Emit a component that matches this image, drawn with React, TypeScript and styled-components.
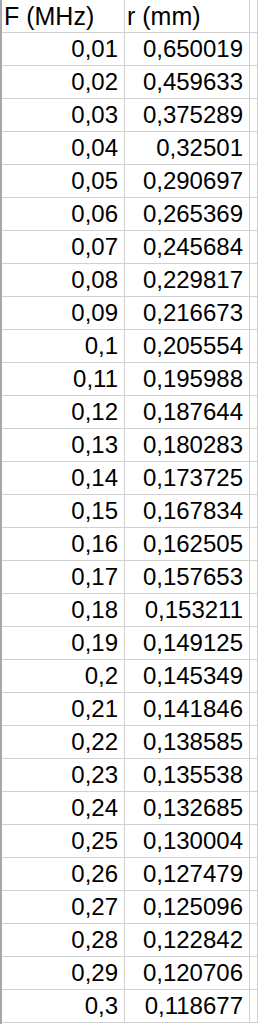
import React from "react";
import styled, { createGlobalStyle } from "styled-components";

const GlobalStyle = createGlobalStyle`
  html, body {
    margin: 0;
    padding: 0;
    background: #ffffff;
  }
`;

const Sheet = styled.div`
  width: 258px;
  height: 1024px;
  overflow: hidden;
  border-left: 2px solid #a7a7a7;
  box-sizing: border-box;
  font-family: "Liberation Sans", Arial, sans-serif;
  font-size: 24px;
  color: #000;
`;

const Row = styled.div`
  display: grid;
  grid-template-columns: 123px 125px 1fr;
  height: 33px;
  box-sizing: border-box;
  border-bottom: 1px solid #d0d0d0;
`;

const Cell = styled.div<{ $align?: "left" | "right" }>`
  box-sizing: border-box;
  border-right: 1px solid #d0d0d0;
  display: flex;
  align-items: center;
  justify-content: ${(p) => (p.$align === "left" ? "flex-start" : "flex-end")};
  padding: ${(p) => (p.$align === "left" ? "0 0 0 2px" : "0 6px 0 0")};
  font-size: ${(p) => (p.$align === "left" ? "25px" : "24px")};
  white-space: nowrap;
  line-height: 1;
`;

const rows: [string, string][] = [
  ["0,01", "0,650019"],
  ["0,02", "0,459633"],
  ["0,03", "0,375289"],
  ["0,04", "0,32501"],
  ["0,05", "0,290697"],
  ["0,06", "0,265369"],
  ["0,07", "0,245684"],
  ["0,08", "0,229817"],
  ["0,09", "0,216673"],
  ["0,1", "0,205554"],
  ["0,11", "0,195988"],
  ["0,12", "0,187644"],
  ["0,13", "0,180283"],
  ["0,14", "0,173725"],
  ["0,15", "0,167834"],
  ["0,16", "0,162505"],
  ["0,17", "0,157653"],
  ["0,18", "0,153211"],
  ["0,19", "0,149125"],
  ["0,2", "0,145349"],
  ["0,21", "0,141846"],
  ["0,22", "0,138585"],
  ["0,23", "0,135538"],
  ["0,24", "0,132685"],
  ["0,25", "0,130004"],
  ["0,26", "0,127479"],
  ["0,27", "0,125096"],
  ["0,28", "0,122842"],
  ["0,29", "0,120706"],
  ["0,3", "0,118677"],
];

export default function App() {
  return (
    <>
      <GlobalStyle />
      <Sheet>
        <Row>
          <Cell $align="left">F (MHz)</Cell>
          <Cell $align="left">r (mm)</Cell>
          <Cell />
        </Row>
        {rows.map(([f, r]) => (
          <Row key={f}>
            <Cell>{f}</Cell>
            <Cell>{r}</Cell>
            <Cell />
          </Row>
        ))}
      </Sheet>
    </>
  );
}
